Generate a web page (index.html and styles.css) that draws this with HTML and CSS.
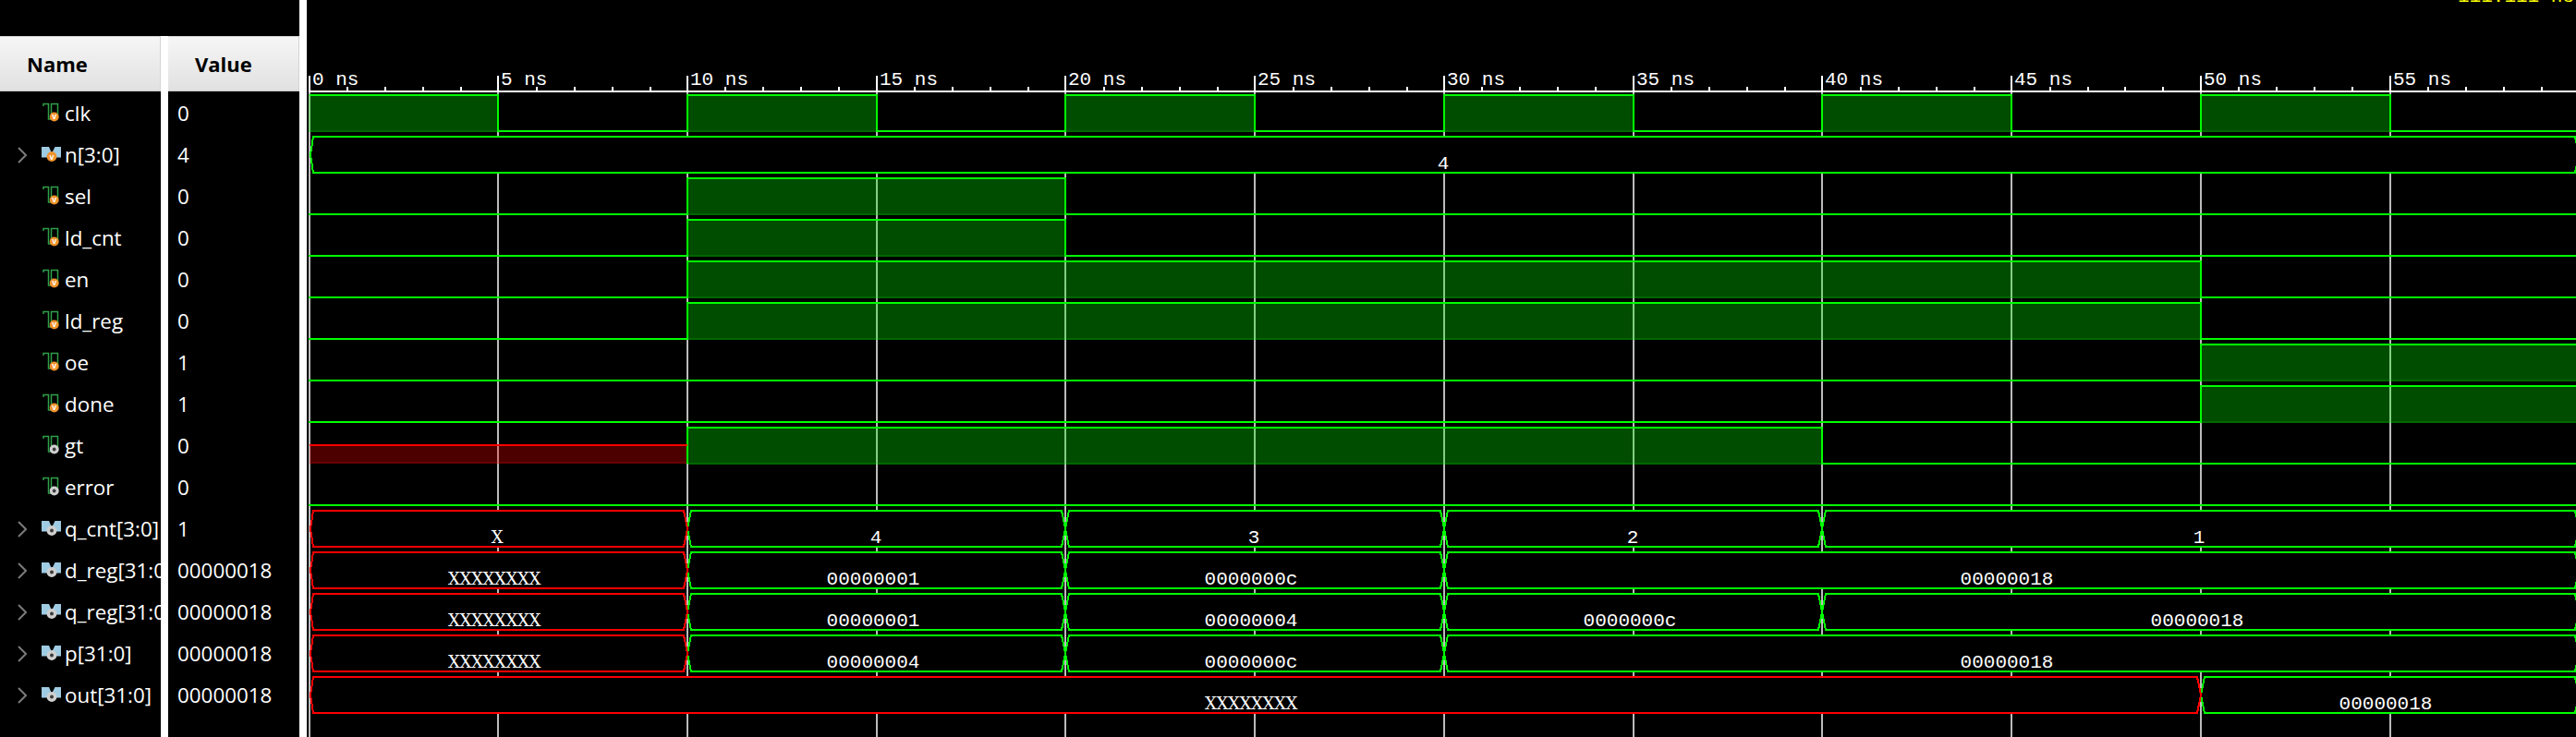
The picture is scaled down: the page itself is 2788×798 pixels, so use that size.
FILE: index.html
```html
<!DOCTYPE html>
<html lang="en">
<head>
<meta charset="utf-8">
<title>Waveform</title>
<link rel="stylesheet" href="styles.css">
</head>
<body>
<svg class="defs" width="0" height="0" aria-hidden="true">
  <symbol id="chev" viewBox="0 0 10 18"><path class="chev-line" d="M1 1L9 9L1 17"/></symbol>
  <symbol id="bit-in" viewBox="0 0 24 24"><path class="bit-line" d="M3 4V1.5H8.5V18H11.5V1.5H18.5V14"/><circle class="dot-o" cx="14.7" cy="15.5" r="5"/><text class="dot-v" x="14.7" y="18.4" text-anchor="middle">v</text></symbol>
  <symbol id="bit-out" viewBox="0 0 24 24"><path class="bit-line" d="M3 4V1.5H8.5V18H11.5V1.5H18.5V14"/><circle class="dot-g" cx="14.7" cy="15.5" r="5"/><circle class="dot-c" cx="14.7" cy="15.5" r="1.9"/></symbol>
  <symbol id="bus-in" viewBox="0 0 24 24"><path class="bus-shape" d="M1 3H9L12 10L15.5 3H22V14.5H1Z"/><circle class="dot-o" cx="12" cy="13.5" r="5.4"/><text class="dot-v" x="12" y="16.6" text-anchor="middle">v</text></symbol>
  <symbol id="bus-out" viewBox="0 0 24 24"><path class="bus-shape" d="M1 3H9L12 10L15.5 3H22V14.5H1Z"/><circle class="dot-g" cx="12" cy="13.5" r="5.4"/><circle class="dot-c" cx="12" cy="13.5" r="2"/></symbol>
</svg>

<div class="app">
  <section class="col names">
    <div class="head">Name</div>
    <div class="rows">
      <div class="row"><span class="slot"></span><svg class="ico"><use href="#bit-in"/></svg><span class="lbl">clk</span></div>
      <div class="row"><svg class="slot"><use href="#chev"/></svg><svg class="ico"><use href="#bus-in"/></svg><span class="lbl">n[3:0]</span></div>
      <div class="row"><span class="slot"></span><svg class="ico"><use href="#bit-in"/></svg><span class="lbl">sel</span></div>
      <div class="row"><span class="slot"></span><svg class="ico"><use href="#bit-in"/></svg><span class="lbl">ld_cnt</span></div>
      <div class="row"><span class="slot"></span><svg class="ico"><use href="#bit-in"/></svg><span class="lbl">en</span></div>
      <div class="row"><span class="slot"></span><svg class="ico"><use href="#bit-in"/></svg><span class="lbl">ld_reg</span></div>
      <div class="row"><span class="slot"></span><svg class="ico"><use href="#bit-in"/></svg><span class="lbl">oe</span></div>
      <div class="row"><span class="slot"></span><svg class="ico"><use href="#bit-in"/></svg><span class="lbl">done</span></div>
      <div class="row"><span class="slot"></span><svg class="ico"><use href="#bit-out"/></svg><span class="lbl">gt</span></div>
      <div class="row"><span class="slot"></span><svg class="ico"><use href="#bit-out"/></svg><span class="lbl">error</span></div>
      <div class="row"><svg class="slot"><use href="#chev"/></svg><svg class="ico"><use href="#bus-out"/></svg><span class="lbl">q_cnt[3:0]</span></div>
      <div class="row"><svg class="slot"><use href="#chev"/></svg><svg class="ico"><use href="#bus-out"/></svg><span class="lbl">d_reg[31:0]</span></div>
      <div class="row"><svg class="slot"><use href="#chev"/></svg><svg class="ico"><use href="#bus-out"/></svg><span class="lbl">q_reg[31:0]</span></div>
      <div class="row"><svg class="slot"><use href="#chev"/></svg><svg class="ico"><use href="#bus-out"/></svg><span class="lbl">p[31:0]</span></div>
      <div class="row"><svg class="slot"><use href="#chev"/></svg><svg class="ico"><use href="#bus-out"/></svg><span class="lbl">out[31:0]</span></div>
    </div>
  </section>

  <div class="sep sep-low"></div>

  <section class="col values">
    <div class="head">Value</div>
    <div class="rows">
      <div class="row">0</div><div class="row">4</div><div class="row">0</div><div class="row">0</div><div class="row">0</div>
      <div class="row">0</div><div class="row">1</div><div class="row">1</div><div class="row">0</div><div class="row">0</div>
      <div class="row">1</div><div class="row">00000018</div><div class="row">00000018</div><div class="row">00000018</div><div class="row">00000018</div>
    </div>
  </section>

  <div class="sep"></div>

  <svg class="wave" viewBox="332 0 2456 798" shape-rendering="crispEdges">
    <text class="cursor" x="2660" y="2">111.111 ns</text>

    <!-- grid -->
    <path class="grid" d="M335 100V798M539 100V798M744 100V798M949 100V798M1153 100V798M1358 100V798M1563 100V798M1768 100V798M1972 100V798M2177 100V798M2382 100V798M2587 100V798"/>

    <!-- ruler -->
    <path class="rule" d="M334 99H2788"/>
    <path class="rule" d="M335 82V98M539 82V98M744 82V98M949 82V98M1153 82V98M1358 82V98M1563 82V98M1768 82V98M1972 82V98M2177 82V98M2382 82V98M2587 82V98"/>
    <path class="rule" d="M376 94V98M417 94V98M458 94V98M499 94V98M581 94V98M622 94V98M663 94V98M704 94V98M785 94V98M826 94V98M867 94V98M908 94V98M990 94V98M1031 94V98M1072 94V98M1113 94V98M1195 94V98M1236 94V98M1277 94V98M1318 94V98M1400 94V98M1441 94V98M1482 94V98M1523 94V98M1604 94V98M1645 94V98M1686 94V98M1727 94V98M1809 94V98M1850 94V98M1891 94V98M1932 94V98M2014 94V98M2055 94V98M2096 94V98M2137 94V98M2219 94V98M2260 94V98M2300 94V98M2341 94V98M2423 94V98M2464 94V98M2505 94V98M2546 94V98M2628 94V98M2669 94V98M2710 94V98M2751 94V98"/>
    <g class="tick-label">
      <text x="338" y="92">0 ns</text><text x="542" y="92">5 ns</text><text x="747" y="92">10 ns</text>
      <text x="952" y="92">15 ns</text><text x="1156" y="92">20 ns</text><text x="1361" y="92">25 ns</text>
      <text x="1566" y="92">30 ns</text><text x="1771" y="92">35 ns</text><text x="1975" y="92">40 ns</text>
      <text x="2180" y="92">45 ns</text><text x="2385" y="92">50 ns</text><text x="2590" y="92">55 ns</text>
    </g>

    <!-- scalar fills -->
    <g class="fill-g">
      <rect x="334" y="103" width="205" height="40"/><rect x="744" y="103" width="205" height="40"/>
      <rect x="1153" y="103" width="205" height="40"/><rect x="1563" y="103" width="205" height="40"/>
      <rect x="1972" y="103" width="205" height="40"/><rect x="2382" y="103" width="205" height="40"/>
      <rect x="744" y="193" width="409" height="40"/>
      <rect x="744" y="238" width="409" height="40"/>
      <rect x="744" y="283" width="1638" height="40"/>
      <rect x="744" y="328" width="1638" height="40"/>
      <rect x="2382" y="373" width="406" height="40"/>
      <rect x="2382" y="418" width="406" height="40"/>
      <rect x="744" y="463" width="1228" height="40"/>
    </g>
    <rect class="fill-r" x="335" y="482" width="409" height="20"/>
    <path class="base-g" d="M334 142H539M744 142H949M1153 142H1358M1563 142H1768M1972 142H2177M2382 142H2587M744 232H1153M744 277H1153M744 322H2382M744 367H2382M2382 412H2788M2382 457H2788M744 502H1972"/>
    <path class="base-r" d="M335 501H744"/>

    <!-- scalar traces -->
    <g class="trace-g">
      <path d="M335 103H539V142H744V103H949V142H1153V103H1358V142H1563V103H1768V142H1972V103H2177V142H2382V103H2587V142H2788"/>
      <path d="M334 232H744V193H1153V232H2788"/>
      <path d="M334 277H744V238H1153V277H2788"/>
      <path d="M334 322H744V283H2382V322H2788"/>
      <path d="M334 367H744V328H2382V367H2788"/>
      <path d="M334 412H2382V373H2788"/>
      <path d="M334 457H2382V418H2788"/>
      <path d="M744 502V463H1972V502H2788"/>
      <path d="M334 547H2788"/>
    </g>
    <path class="trace-r" d="M335 482H744"/>

    <!-- buses -->
    <g class="bus-g">
      <polygon points="336,167.5 339,148 2787,148 2791,167.5 2787,187 339,187"/>

      <polygon points="744,572.5 748,553 1149,553 1153,572.5 1149,592 748,592"/>
      <polygon points="1153,572.5 1157,553 1559,553 1563,572.5 1559,592 1157,592"/>
      <polygon points="1563,572.5 1567,553 1968,553 1972,572.5 1968,592 1567,592"/>
      <polygon points="1972,572.5 1976,553 2787,553 2791,572.5 2787,592 1976,592"/>

      <polygon points="744,617.5 748,598 1149,598 1153,617.5 1149,637 748,637"/>
      <polygon points="1153,617.5 1157,598 1559,598 1563,617.5 1559,637 1157,637"/>
      <polygon points="1563,617.5 1567,598 2787,598 2791,617.5 2787,637 1567,637"/>

      <polygon points="744,662.5 748,643 1149,643 1153,662.5 1149,682 748,682"/>
      <polygon points="1153,662.5 1157,643 1559,643 1563,662.5 1559,682 1157,682"/>
      <polygon points="1563,662.5 1567,643 1968,643 1972,662.5 1968,682 1567,682"/>
      <polygon points="1972,662.5 1976,643 2787,643 2791,662.5 2787,682 1976,682"/>

      <polygon points="744,707.5 748,688 1149,688 1153,707.5 1149,727 748,727"/>
      <polygon points="1153,707.5 1157,688 1559,688 1563,707.5 1559,727 1157,727"/>
      <polygon points="1563,707.5 1567,688 2787,688 2791,707.5 2787,727 1567,727"/>

      <polygon points="2382,752.5 2386,733 2787,733 2791,752.5 2787,772 2386,772"/>
    </g>
    <g class="bus-r">
      <polygon points="336,572.5 339,553 740,553 744,572.5 740,592 339,592"/>
      <polygon points="336,617.5 339,598 740,598 744,617.5 740,637 339,637"/>
      <polygon points="336,662.5 339,643 740,643 744,662.5 740,682 339,682"/>
      <polygon points="336,707.5 339,688 740,688 744,707.5 740,727 339,727"/>
      <polygon points="336,752.5 339,733 2378,733 2382,752.5 2378,772 339,772"/>
    </g>

    <!-- bus values -->
    <g class="bus-label">
      <text x="1562" y="183">4</text>
      <text class="xs" x="538" y="588">X</text><text x="948" y="588">4</text><text x="1357" y="588">3</text><text x="1767" y="588">2</text><text x="2380" y="588">1</text>
      <text class="xs" x="535" y="633">XXXXXXXX</text><text x="945" y="633">00000001</text><text x="1354" y="633">0000000c</text><text x="2172" y="633">00000018</text>
      <text class="xs" x="535" y="678">XXXXXXXX</text><text x="945" y="678">00000001</text><text x="1354" y="678">00000004</text><text x="1764" y="678">0000000c</text><text x="2378" y="678">00000018</text>
      <text class="xs" x="535" y="723">XXXXXXXX</text><text x="945" y="723">00000004</text><text x="1354" y="723">0000000c</text><text x="2172" y="723">00000018</text>
      <text class="xs" x="1354" y="768">XXXXXXXX</text><text x="2582" y="768">00000018</text>
    </g>
  </svg>
</div>
</body>
</html>
```

FILE: styles.css
```css
html, body {
  margin: 0;
  height: 798px;
  overflow: hidden;
  background: #000;
}

.defs {
  position: absolute;
}

.app {
  display: flex;
  height: 798px;
  background: #000;
  font-family: "Open Sans", "Noto Sans", sans-serif;
  color: #fff;
}

.col {
  display: flex;
  flex-direction: column;
  padding-top: 39px;
  box-sizing: border-box;
  overflow: hidden;
  flex: none;
}

.names {
  width: 174px;
}

.values {
  width: 142px;
}

.sep {
  flex: none;
  width: 8px;
  background: #fff;
}

.sep-low {
  margin-top: 39px;
}

.head {
  height: 60px;
  box-sizing: border-box;
  padding-left: 29px;
  line-height: 58px;
  font-size: 22px;
  font-weight: 700;
  color: #000;
  background: linear-gradient(#f6f6f6, #e1e1e1);
  border-top: 1px solid #d4d4d4;
  border-bottom: 1px solid #c8c8c8;
  border-right: 1px solid #d4d4d4;
}

.rows {
  margin-top: 1px;
}

.row {
  display: flex;
  align-items: center;
  height: 45px;
  white-space: nowrap;
  font-size: 22.4px;
}

.names .row {
  padding-left: 19px;
}

.values .row {
  padding-left: 10px;
}

.slot {
  flex: none;
  width: 10px;
  height: 18px;
  margin-right: 15px;
}

.ico {
  flex: none;
  width: 24px;
  height: 24px;
}

.lbl {
  margin-left: 2px;
}

.chev-line {
  fill: none;
  stroke: #7a7a7a;
  stroke-width: 2;
}

.bit-line {
  fill: none;
  stroke: #2f9e47;
  stroke-width: 1.5;
}

.bus-shape {
  fill: #9fcbe3;
}

.dot-o {
  fill: #f0932b;
}

.dot-g {
  fill: #cfcfcf;
}

.dot-c {
  fill: #3c3c3c;
}

.dot-v {
  font: 700 9px "Liberation Sans", sans-serif;
  fill: #fff;
}

.wave {
  flex: 1;
  display: block;
  height: 798px;
}

.grid {
  fill: none;
  stroke: #bbb;
  stroke-width: 2;
}

.rule {
  fill: none;
  stroke: #fff;
  stroke-width: 2;
}

.tick-label text,
.bus-label text,
.cursor {
  font-family: "Liberation Mono", monospace;
  font-size: 21px;
  fill: #fff;
  white-space: pre;
}

.cursor {
  fill: #ffff00;
}

.bus-label text {
  text-anchor: middle;
}

.bus-label .xs {
  font-family: "DejaVu Serif", serif;
  font-size: 18px;
  letter-spacing: -0.3px;
}

.fill-g rect {
  fill: rgba(0, 255, 0, 0.3);
}

.fill-r {
  fill: rgba(255, 0, 0, 0.3);
}

.base-g,
.base-r {
  fill: none;
  stroke-width: 2;
}

.base-g {
  stroke: rgba(0, 255, 0, 0.15);
}

.base-r {
  stroke: rgba(255, 0, 0, 0.15);
}

.trace-g path {
  fill: none;
  stroke: #00ff00;
  stroke-width: 2;
}

.trace-r {
  fill: none;
  stroke: #ff0000;
  stroke-width: 2;
}

.bus-g polygon {
  fill: #000;
  stroke: #00ff00;
  stroke-width: 2;
}

.bus-r polygon {
  fill: #000;
  stroke: #ff0000;
  stroke-width: 2;
}
```
